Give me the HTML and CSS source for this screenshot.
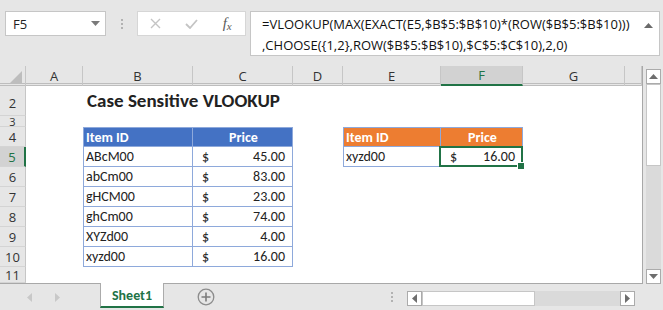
FILE: index.html
```html
<!DOCTYPE html>
<html lang="en">
<head>
    <meta charset="UTF-8">
    <title>Case Sensitive VLOOKUP</title>
    <link rel="stylesheet" href="styles.css">
</head>
<body>
    <div class="formula-bar">
        <div class="name-box">
            <span>F5</span>
            <svg width="9" height="5" viewBox="0 0 9 5"><path d="M0 0h9L4.5 5z" fill="#7a7a7a"/></svg>
        </div>
        <div class="grip"><span></span><span></span><span></span></div>
        <div class="fn-buttons">
            <div class="fn-btn">
                <svg width="11" height="11" viewBox="0 0 11 11"><path d="M1 1l9 9M10 1l-9 9" stroke="#c4c4c4" stroke-width="1.4"/></svg>
            </div>
            <div class="fn-btn">
                <svg width="13" height="10" viewBox="0 0 13 10"><path d="M1 5l4 4 7-8" stroke="#c4c4c4" stroke-width="1.8" fill="none"/></svg>
            </div>
            <div class="fn-btn fx"><i>f</i><small>x</small></div>
        </div>
        <div class="formula">
            <div class="formula-text">=VLOOKUP(MAX(EXACT(E5,$B$5:$B$10)*(ROW($B$5:$B$10)))<br>,CHOOSE({1,2},ROW($B$5:$B$10),$C$5:$C$10),2,0)</div>
            <svg class="collapse" width="9" height="6" viewBox="0 0 9 6"><path d="M0 6L4.5 1 9 6z" fill="#6a6a6a"/></svg>
        </div>
    </div>

    <div class="sheet">
        <div class="grid">
            <div class="row col-heads">
                <div class="corner"><svg width="13" height="13" viewBox="0 0 13 13"><path d="M13 0v13H0z" fill="#bdbdbd"/></svg></div>
                <div class="ch">A</div>
                <div class="ch">B</div>
                <div class="ch">C</div>
                <div class="ch">D</div>
                <div class="ch">E</div>
                <div class="ch active">F</div>
                <div class="ch">G</div>
                <div class="ch"></div>
            </div>

            <div class="row r2">
                <div class="rh">2</div>
                <div></div>
                <div class="title">Case Sensitive VLOOKUP</div>
                <div></div><div></div><div></div><div></div><div></div><div></div>
            </div>

            <div class="row r3">
                <div class="rh">3</div>
                <div></div><div></div><div></div><div></div><div></div><div></div><div></div><div></div>
            </div>

            <div class="row">
                <div class="rh">4</div>
                <div></div>
                <div class="tb top first th blue">Item ID</div>
                <div class="tb top th blue center">Price</div>
                <div></div>
                <div class="tb top first th orange">Item ID</div>
                <div class="tb top th orange center">Price</div>
                <div></div><div></div>
            </div>

            <div class="row">
                <div class="rh active">5</div>
                <div></div>
                <div class="tb first">ABcM00</div>
                <div class="tb money"><span>$</span><span>45.00</span></div>
                <div></div>
                <div class="tb first">xyzd00</div>
                <div class="tb money sel"><span>$</span><span>16.00</span></div>
                <div></div><div></div>
            </div>

            <div class="row">
                <div class="rh">6</div>
                <div></div>
                <div class="tb first">abCm00</div>
                <div class="tb money"><span>$</span><span>83.00</span></div>
                <div></div><div></div><div></div><div></div><div></div>
            </div>

            <div class="row">
                <div class="rh">7</div>
                <div></div>
                <div class="tb first">gHCM00</div>
                <div class="tb money"><span>$</span><span>23.00</span></div>
                <div></div><div></div><div></div><div></div><div></div>
            </div>

            <div class="row">
                <div class="rh">8</div>
                <div></div>
                <div class="tb first">ghCm00</div>
                <div class="tb money"><span>$</span><span>74.00</span></div>
                <div></div><div></div><div></div><div></div><div></div>
            </div>

            <div class="row">
                <div class="rh">9</div>
                <div></div>
                <div class="tb first">XYZd00</div>
                <div class="tb money"><span>$</span><span>4.00</span></div>
                <div></div><div></div><div></div><div></div><div></div>
            </div>

            <div class="row">
                <div class="rh">10</div>
                <div></div>
                <div class="tb first">xyzd00</div>
                <div class="tb money"><span>$</span><span>16.00</span></div>
                <div></div><div></div><div></div><div></div><div></div>
            </div>

            <div class="row r11">
                <div class="rh">11</div>
                <div></div><div></div><div></div><div></div><div></div><div></div><div></div><div></div>
            </div>
        </div>

        <div class="vscroll">
            <div class="sb-btn">
                <svg width="9" height="5" viewBox="0 0 9 5"><path d="M0 5L4.5 0 9 5z" fill="#6e6e6e"/></svg>
            </div>
            <div class="v-thumb"></div>
            <div class="v-track"></div>
            <div class="sb-btn">
                <svg width="9" height="5" viewBox="0 0 9 5"><path d="M0 0h9L4.5 5z" fill="#6e6e6e"/></svg>
            </div>
        </div>
    </div>

    <div class="tabs">
        <div class="nav">
            <svg width="5" height="9" viewBox="0 0 5 9"><path d="M5 0v9L0 4.5z" fill="#c8c8c8"/></svg>
            <svg width="5" height="9" viewBox="0 0 5 9"><path d="M0 0v9l5-4.5z" fill="#c8c8c8"/></svg>
        </div>
        <div class="tab">Sheet1</div>
        <div class="add">
            <svg width="18" height="18" viewBox="0 0 18 18">
                <circle cx="9" cy="9" r="7.8" fill="none" stroke="#8c8c8c" stroke-width="1.3"/>
                <path d="M9 4.5v9M4.5 9h9" stroke="#7c7c7c" stroke-width="1.6"/>
            </svg>
        </div>
        <div class="tab-grip"><span></span><span></span><span></span></div>
        <div class="hscroll">
            <div class="sb-btn">
                <svg width="5" height="9" viewBox="0 0 5 9"><path d="M5 0v9L0 4.5z" fill="#6e6e6e"/></svg>
            </div>
            <div class="h-thumb"></div>
            <div class="h-track"></div>
            <div class="sb-btn">
                <svg width="5" height="9" viewBox="0 0 5 9"><path d="M0 0v9l5-4.5z" fill="#6e6e6e"/></svg>
            </div>
        </div>
    </div>
</body>
</html>
```

FILE: styles.css
```css
* {
    margin: 0;
    padding: 0;
    box-sizing: border-box;
}

body {
    width: 663px;
    height: 310px;
    overflow: hidden;
    background: #e6e6e6;
    color: #222;
    font-family: "Open Sans", "Noto Sans", "DejaVu Sans", sans-serif;
}

/* formula bar */

.formula-bar {
    display: flex;
    align-items: flex-start;
    height: 66px;
    padding: 11px 3px 0 5px;
}

.name-box {
    display: flex;
    align-items: center;
    justify-content: space-between;
    width: 101px;
    height: 25px;
    padding: 0 5px 0 7px;
    background: #fff;
    border: 1px solid #c6c6c6;
    font-size: 13px;
}

.grip {
    display: flex;
    flex-direction: column;
    align-items: center;
    justify-content: center;
    gap: 2px;
    width: 31px;
    height: 25px;
}

.grip span,
.tab-grip span {
    width: 2px;
    height: 2px;
    background: #b2b2b2;
}

.fn-buttons {
    display: flex;
    width: 109px;
    height: 25px;
    background: #fff;
    border: 1px solid #d6d6d6;
}

.fn-btn {
    display: flex;
    align-items: center;
    justify-content: center;
    width: 36px;
}

.fx {
    font-family: "Liberation Serif", "DejaVu Serif", serif;
    color: #5a5a5a;
    font-size: 15px;
}

.fx small {
    font-size: 11px;
    font-style: italic;
    margin-top: 4px;
}

.formula {
    display: flex;
    justify-content: space-between;
    flex: 1;
    height: 45px;
    margin-left: 4px;
    padding: 2px 6px 0 11px;
    background: #fff;
    border: 1px solid #c6c6c6;
}

.formula-text {
    font-size: 13px;
    line-height: 21px;
    white-space: nowrap;
    color: #111;
}

.collapse {
    margin-top: 8px;
}

/* sheet */

.sheet {
    display: flex;
    height: 218px;
}

.grid {
    width: 643px;
    background: #fff;
    border-right: 1px solid #a8a8a8;
    border-bottom: 1px solid #a8a8a8;
    overflow: hidden;
}

.row {
    display: grid;
    grid-template-columns: 26px 57px 110px 100px 50px 98px 82px 102px 17px;
    height: 20px;
    font-family: "Carlito", "Lato", sans-serif;
    font-size: 14px;
}

.row > div {
    display: flex;
    align-items: center;
    white-space: nowrap;
    min-width: 0;
}

.r2 {
    height: 30px;
}

.r3 {
    height: 11px;
}

.r11 {
    height: 16px;
}

.col-heads {
    height: 20px;
    background: #e6e6e6;
    border-bottom: 3px double #bdbdbd;
    font-family: "Open Sans", "Noto Sans", sans-serif;
    font-size: 13px;
}

.col-heads > div {
    justify-content: center;
    border-right: 1px solid #c6c6c6;
    color: #333;
}

.col-heads > .corner {
    align-items: flex-end;
    justify-content: flex-end;
    padding: 0 3px 2px 0;
}

.ch.active {
    background: #d2d2d2;
    border-bottom: 2px solid #217346;
    color: #217346;
}

.rh {
    justify-content: center;
    overflow: hidden;
    background: #e6e6e6;
    border-right: 1px solid #c6c6c6;
    border-bottom: 1px solid #d4d4d4;
    font-family: "Open Sans", "Noto Sans", sans-serif;
    font-size: 13px;
    color: #333;
}

.r3 > .rh {
    font-size: 11px;
    line-height: 11px;
}

.rh.active {
    background: #d2d2d2;
    border-right: 2px solid #217346;
    color: #217346;
}

.r2 > .rh {
    padding-top: 4px;
}

.title {
    align-self: end;
    padding: 0 0 4px 4px;
    font-size: 19px;
    font-weight: bold;
    overflow: visible;
}

/* tables */

.tb {
    padding-left: 2px;
    border-right: 1px solid #8ea9db;
    border-bottom: 1px solid #8ea9db;
}

.tb.first {
    border-left: 1px solid #8ea9db;
}

.tb.top {
    border-top: 1px solid #8ea9db;
}

.th {
    color: #fff;
    font-weight: bold;
}

.th.center {
    justify-content: center;
}

.blue {
    background: #4472c4;
}

.orange {
    background: #ed7d31;
}

.row > .money {
    justify-content: space-between;
    padding: 0 7px 0 9px;
}

.sel {
    position: relative;
    z-index: 1;
}

.sel::after {
    content: "";
    position: absolute;
    inset: -1px -1px -1px -2px;
    border: 2px solid #217346;
}

.sel::before {
    content: "";
    position: absolute;
    right: -3px;
    bottom: -4px;
    width: 6px;
    height: 6px;
    background: #217346;
    border: 1px solid #fff;
    z-index: 2;
}

/* scrollbars */

.vscroll {
    display: flex;
    flex-direction: column;
    width: 20px;
    padding: 3px 2px 0 3px;
}

.sb-btn {
    display: flex;
    align-items: center;
    justify-content: center;
    width: 15px;
    height: 15px;
    background: #fff;
    border: 1px solid #ababab;
}

.v-thumb {
    height: 82px;
    background: #fff;
    border: 1px solid #c6c6c6;
}

.v-track {
    flex: 1;
    background: #dadada;
}

/* sheet tabs */

.tabs {
    display: flex;
    align-items: flex-start;
    height: 26px;
}

.nav {
    display: flex;
    align-items: center;
    gap: 23px;
    width: 100px;
    height: 26px;
    padding-left: 27px;
}

.tab {
    width: 64px;
    height: 25px;
    margin-top: -1px;
    padding-top: 4px;
    background: #fff;
    border-left: 1px solid #ababab;
    border-right: 1px solid #ababab;
    border-bottom: 2px solid #217346;
    text-align: center;
    font-family: "Carlito", "Lato", sans-serif;
    font-size: 14px;
    font-weight: bold;
    color: #217346;
}

.add {
    display: flex;
    align-items: center;
    height: 26px;
    margin-left: 33px;
}

.tab-grip {
    display: flex;
    flex-direction: column;
    justify-content: center;
    gap: 2px;
    height: 26px;
    margin-left: 176px;
}

.hscroll {
    display: flex;
    margin: 7px 0 0 14px;
}

.h-thumb {
    width: 113px;
    height: 15px;
    background: #fff;
    border: 1px solid #c6c6c6;
}

.h-track {
    width: 85px;
    height: 15px;
    background: #dadada;
}
```
